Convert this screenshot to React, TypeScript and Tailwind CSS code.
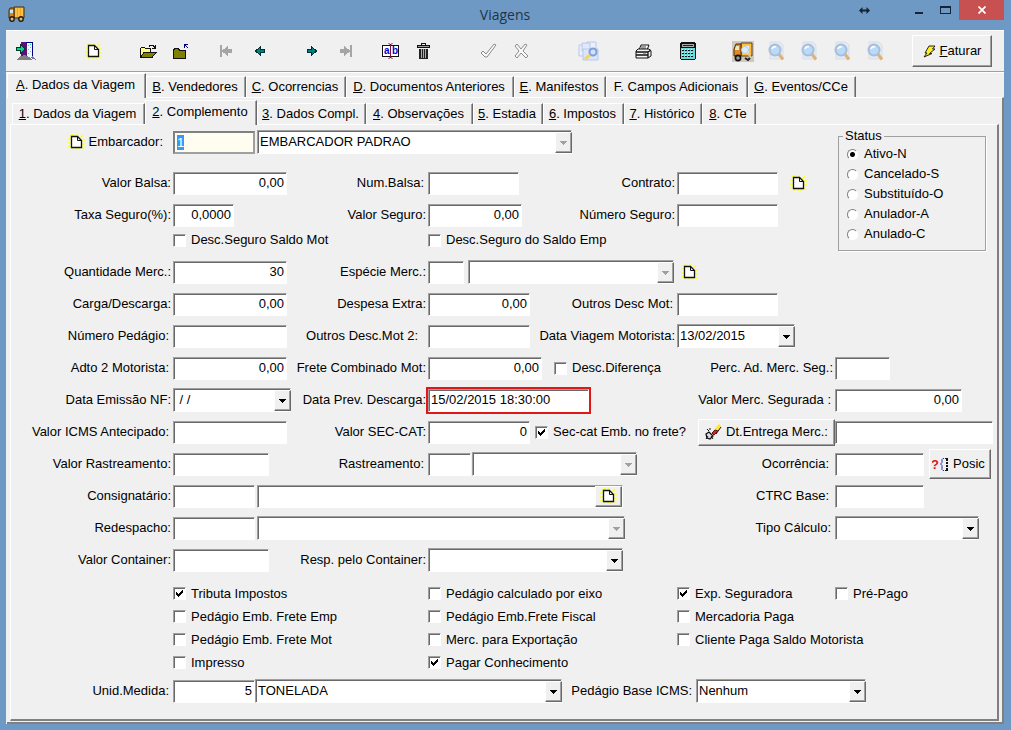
import { useId, type ReactNode } from "react";

const SUNKEN =
    "border border-t-[#a0a0a0] border-l-[#a0a0a0] border-r-white border-b-white bg-white shadow-[inset_1px_1px_0_#696969]";
const RAISED =
    "border border-t-white border-l-white border-r-[#696969] border-b-[#696969] bg-[#f0f0f0] shadow-[inset_-1px_-1px_0_#a0a0a0]";
const ROW = "grid h-8 grid-cols-[162px_255px_249px_158px_minmax(0,1fr)] items-center";
const CELL = "flex items-center justify-between whitespace-nowrap";

/* ---------- icons ---------- */

function TruckIcon() {
    return (
        <svg width="18" height="16" viewBox="0 0 18 16">
            <path d="M6 1h10v11H6z" fill="#f5a81c" stroke="#4a2c08" />
            <path d="M8 2v9M11 2v9M14 2v9" stroke="#ffd873" />
            <path d="M1 4l1-2h4v10H1z" fill="#d9881a" stroke="#4a2c08" />
            <path d="M2 4h3v3H2z" fill="#cfe4f5" />
            <circle cx="4" cy="13" r="2.2" fill="#d8c090" stroke="#2a1a08" strokeWidth="1.4" />
            <circle cx="13" cy="13" r="2.2" fill="#d8c090" stroke="#2a1a08" strokeWidth="1.4" />
        </svg>
    );
}

function ExitIcon() {
    return (
        <svg width="21" height="19" viewBox="0 0 21 19" shapeRendering="crispEdges">
            <path d="M5 0h12v14H5z" fill="#000080" />
            <path d="M9 1h7v15H9z" fill="#e8ffff" />
            <path
                d="M10 2h1v1h-1zM12 3h1v1h-1zM14 2h1v1h-1zM10 5h1v1h-1zM12 7h1v1h-1zM14 5h1v1h-1zM10 9h1v1h-1zM12 11h1v1h-1zM14 9h1v1h-1z"
                fill="#22ccee"
            />
            <path d="M5 0h4l2 2v14l-6-2z" fill="#5b1080" />
            <path d="M0 18l5-4 4-1 4 2 3 3z" fill="#808080" />
            <path d="M16 14l4 3v1l-5-2z" fill="#7a70a8" />
            <path d="M.5 5.500h4v-3L9 7l-4.500 4.500v-3h-4z" fill="#00d890" stroke="#003828" />
        </svg>
    );
}

function NewDocIcon() {
    return (
        <svg width="17" height="16" viewBox="0 0 17 16">
            <path
                d="M4 0l2 3M9 0v2M15 1l-3 3M0 5h3M0 9h3M0 13l3-1M17 6h-3M17 10h-3M16 15l-2-2M8 16v-2M2 1l2 2M11 16v-2M4 16v-2"
                stroke="#ffff2e"
                strokeWidth="1.500"
            />
            <path d="M3.500 2.500h6l4 4v7h-10z" fill="#fff" stroke="#111" strokeWidth="1.300" />
            <path d="M9.500 2.500v4h4" fill="none" stroke="#111" />
        </svg>
    );
}

function OpenFolderIcon() {
    return (
        <svg width="17" height="14" viewBox="0 0 17 14" shapeRendering="crispEdges">
            <path d="M.5 13V4.500l1-1h3l1 1h5V8" fill="#ffff88" stroke="#111" />
            <path d="M.5 13.500L4 8.500h12l-4 5z" fill="#808000" stroke="#111" />
            <path d="M9 2.500l1-1h3l2 2M15.500 1v3H12" fill="none" stroke="#111" />
        </svg>
    );
}

function CloseFolderIcon() {
    return (
        <svg width="17" height="15" viewBox="0 0 17 15" shapeRendering="crispEdges">
            <path d="M.5 14.500V6.500l1-2h4l1 2h6v8z" fill="#808000" stroke="#111" />
            <path d="M11.500 4V.5H15M12 1l3 3" fill="none" stroke="#00007a" />
        </svg>
    );
}

function ArrowIcon({ back, bar, off }: { back?: boolean; bar?: boolean; off?: boolean }) {
    return (
        <svg
            width="15"
            height="12"
            viewBox="0 0 15 12"
            shapeRendering="crispEdges"
            className={back ? "rotate-180" : undefined}
        >
            <path
                d="M1.500 4.500h4v-3l5 4.500-5 4.500v-3h-4z"
                fill={off ? "#a5a5a5" : "#008080"}
                stroke={off ? "#a5a5a5" : "#003030"}
            />
            {bar && <path d="M11 0h2v12h-2z" fill="#a5a5a5" />}
        </svg>
    );
}

function RenameIcon() {
    return (
        <svg width="18" height="16" viewBox="0 0 18 16">
            <path d="M.5 2.500h16v11H.5z" fill="#fff" stroke="#111" strokeWidth="1.300" shapeRendering="crispEdges" />
            <path d="M8.500 1v14M6.500.5l2 1 2-1M6.500 15.500l2-1 2 1" fill="none" stroke="#801030" />
            <text x="2" y="11" fontSize="10" fontWeight="700" fontFamily="Liberation Sans, sans-serif" fill="#0000e0">a</text>
            <text x="10" y="11" fontSize="10" fontWeight="700" fontFamily="Liberation Sans, sans-serif" fill="#0000e0">b</text>
        </svg>
    );
}

function TrashIcon() {
    return (
        <svg width="13" height="17" viewBox="0 0 13 17" shapeRendering="crispEdges">
            <path d="M4.500 2.500v-2h4v2" fill="none" stroke="#111" />
            <path d="M0 2h13v3H0z" fill="#111" />
            <path d="M1 3h11v1H1z" fill="#999" />
            <path d="M2 6h9v10H2z" fill="#222" />
            <path d="M4.500 6v9M6.500 6v9M8.500 6v9" stroke="#aaa" />
        </svg>
    );
}

function CheckOutlineIcon() {
    return (
        <svg width="17" height="16" viewBox="0 0 17 16">
            <path d="M1 10l2-2 3 3 8-10 2 1L7 14H5z" fill="#f8f8f8" stroke="#8c8c8c" />
        </svg>
    );
}

function CrossOutlineIcon() {
    return (
        <svg width="15" height="16" viewBox="0 0 15 16">
            <path
                d="M1 3l2-2 4 5 4-5 2 1-4 6 5 5-2 2-5-5-4 5-2-2 4-5z"
                fill="#f8f8f8"
                stroke="#8c8c8c"
            />
        </svg>
    );
}

function CopySearchIcon() {
    return (
        <svg width="22" height="20" viewBox="0 0 22 20">
            <path d="M1 4h7v11H1zM9 1h9v8H9z" fill="#eaf0fc" stroke="#b8c8ec" />
            <path d="M4 2h8v8H4z" fill="#dfe9fb" stroke="#b8c8ec" />
            <path d="M5 8h15v11H5z" fill="#dbe6fa" stroke="#b8c8ec" />
            <circle cx="15" cy="11" r="3.500" fill="#d5e3f9" stroke="#7f9ede" strokeWidth="2" />
            <path d="M12 14l-5 4" stroke="#f2d468" strokeWidth="3" />
        </svg>
    );
}

function PrinterIcon() {
    return (
        <svg width="17" height="15" viewBox="0 0 17 15">
            <path d="M4 6l2-5h8l-2 5" fill="#fff" stroke="#111" />
            <path d="M6 3h5M6 5h5" stroke="#111" strokeWidth=".8" />
            <path d="M1 7l2-2h11l2 2v5l-3 2H1z" fill="#f4f4f4" stroke="#111" />
            <path d="M1 8h12l3-2M13 8v6M1 11h12" fill="none" stroke="#111" strokeWidth="1.300" />
            <path d="M8 9.500h3" stroke="#c8b400" />
        </svg>
    );
}

function CalculatorIcon() {
    return (
        <svg width="16" height="18" viewBox="0 0 16 18" shapeRendering="crispEdges">
            <path d="M1 0h14v1h1v16h-1v1H1v-1H0V1h1z" fill="#111" />
            <path d="M2 2h12v3H2z" fill="#aaa" />
            <path d="M3 3h10v1H3z" fill="#222" />
            <path d="M1 6h14v11H1z" fill="#6adada" />
            <path d="M2 8.500h12M2 11.500h12M2 14.500h12" stroke="#111" strokeWidth="1" strokeDasharray="2 1" />
            <path d="M2 7.500h12M2 10.500h12M2 13.500h12" stroke="#d8ffff" strokeDasharray="1 2" />
        </svg>
    );
}

function TruckSearchIcon() {
    return (
        <svg width="22" height="21" viewBox="0 0 22 21">
            <path d="M0 0h22v21H0z" fill="#cdc8c0" />
            <path d="M9 2h11v13H9z" fill="#ffc23a" stroke="#5a3c10" />
            <path d="M2 8l2-5h5v12H2z" fill="#e08a20" stroke="#4a2c08" />
            <path d="M3 8l1-3h3v4H3z" fill="#f4e2c4" />
            <circle cx="6" cy="17" r="2.600" fill="#999" stroke="#111" strokeWidth="1.600" />
            <path d="M11 5h6v8h-6z" fill="#f4f4f4" />
            <circle cx="13" cy="9" r="3.500" fill="#dcecff" stroke="#b0c8e8" />
            <path d="M16 12l3 5" stroke="#e8c8a0" strokeWidth="2" />
            <path d="M13 17l3 2 2-2" fill="none" stroke="#222" strokeWidth="2" />
        </svg>
    );
}

function SearchIcon() {
    return (
        <svg width="18" height="20" viewBox="0 0 18 20">
            <path d="M3 1h10l3 3v14H3z" fill="#e4eaf2" stroke="#d6dfe9" />
            <path d="M11.500 12.500l4.500 6" stroke="#dcb478" strokeWidth="3" />
            <circle cx="8" cy="9" r="5.500" fill="#b9daf8" stroke="#a9bddb" strokeWidth="2" />
            <path d="M5 8q1-3 4-2" fill="none" stroke="#fff" strokeWidth="1.500" />
        </svg>
    );
}

function BoltIcon() {
    return (
        <svg width="13" height="13" viewBox="0 0 13 13">
            <path d="M6 1h6L9.500 4H12L6.500 8.500H9L1 12l3-4H2z" fill="#ffee20" stroke="#222" />
        </svg>
    );
}

function EraserIcon() {
    return (
        <svg width="17" height="16" viewBox="0 0 17 16">
            <path d="M15 1L9 8" stroke="#ffe62a" strokeWidth="3" />
            <path d="M16 3l-5 7" stroke="#111" />
            <path d="M10 6l-3 3 2 2 4-4z" fill="#e02020" stroke="#601010" />
            <path d="M1 10l3-2 4 4-3 3-3-1z" fill="#ddd" stroke="#111" strokeWidth="1.300" />
            <path d="M2 5l2 2M5 4v2M1 15l2-3M8 15l-2-3" stroke="#111" />
        </svg>
    );
}

function QueryIcon() {
    return (
        <svg width="17" height="15" viewBox="0 0 17 15">
            <text x="-1" y="12" fontSize="13" fontWeight="700" fontFamily="Liberation Sans, sans-serif" fill="#e01020">?</text>
            <path d="M12 1.500h-1l-1 1v3L8.500 7 10 8.500v4l1 1h1" fill="none" stroke="#2030c0" />
            <path d="M15 2v12" stroke="#111" strokeWidth="2" strokeDasharray="2 1" />
            <path d="M13 1.500h3M13 13.500h3" stroke="#111" />
        </svg>
    );
}

/* ---------- controls ---------- */

function Label({ htmlFor, className = "pr-0.5", children }: { htmlFor?: string; className?: string; children: ReactNode }) {
    return (
        <label htmlFor={htmlFor} className={`ml-auto shrink-0 whitespace-nowrap text-right ${className}`}>
            {children}
        </label>
    );
}

function Field({ id, width, value = "", left, label }: { id?: string; width: string; value?: string; left?: boolean; label?: string }) {
    return (
        <input
            id={id}
            aria-label={label}
            type="text"
            defaultValue={value}
            className={`h-[23px] shrink-0 px-0.5 pb-px outline-none ${SUNKEN} ${width} ${left ? "text-left" : "text-right"}`}
        />
    );
}

function Combo({ id, width, value = "", disabled, label }: { id?: string; width: string; value?: string; disabled?: boolean; label?: string }) {
    return (
        <div className={`relative h-6 shrink-0 ${width}`}>
            <select
                id={id}
                aria-label={label}
                disabled={disabled}
                className={`h-full w-full appearance-none pr-5 pl-0.5 text-black opacity-100 outline-none ${SUNKEN}`}
            >
                <option>{value}</option>
            </select>
            <span className={`pointer-events-none absolute top-0.5 right-0 bottom-px flex w-[17px] items-center justify-center ${RAISED}`}>
                <svg width="7" height="4" viewBox="0 0 7 4" shapeRendering="crispEdges">
                    <path d="M0 0h7v1H6v1H5v1H4v1H3V3H2V2H1V1H0z" fill={disabled ? "#a0a0a0" : "#000"} />
                </svg>
            </span>
        </div>
    );
}

function Check({ children, checked }: { children: ReactNode; checked?: boolean }) {
    return (
        <label className="flex shrink-0 items-center gap-[5px] whitespace-nowrap">
            <span className="relative size-[13px] shrink-0">
                <input type="checkbox" defaultChecked={checked} className={`peer block size-full appearance-none ${SUNKEN}`} />
                <svg
                    className="pointer-events-none absolute top-[3px] left-[3px] hidden peer-checked:block"
                    width="7"
                    height="7"
                    viewBox="0 0 7 7"
                    shapeRendering="crispEdges"
                >
                    <path d="M0 2h1v1h1v1h1V3h1V2h1V1h1V0h1v3H6v1H5v1H4v1H3v1H2V6H1V5H0z" />
                </svg>
            </span>
            {children}
        </label>
    );
}

function NewButton({ label, className = "" }: { label: string; className?: string }) {
    return (
        <button type="button" aria-label={label} className={className}>
            <NewDocIcon />
        </button>
    );
}

type TabDef = { key: string; text: string; width: string; plain?: boolean };

function Tabs({ tabs, active }: { tabs: TabDef[]; active: string }) {
    return (
        <div role="tablist" className="flex h-6 items-end">
            {tabs.map((t) => {
                const on = t.key === active;
                return (
                    <button
                        key={t.key}
                        type="button"
                        role="tab"
                        aria-selected={on}
                        className={`shrink-0 whitespace-nowrap border-t border-r border-l border-t-white border-r-[#696969] border-l-white bg-[#f0f0f0] pr-0.5 text-center shadow-[inset_-1px_0_0_#a0a0a0] ${t.width} ${
                            on ? "relative -mb-px h-[25px] pb-0.5" : "h-[21px]"
                        }`}
                    >
                        {t.plain ? t.key : <u>{t.key}</u>}. {t.text}
                    </button>
                );
            })}
        </div>
    );
}

const mainTabs: TabDef[] = [
    { key: "A", text: "Dados da Viagem", width: "w-[139px]" },
    { key: "B", text: "Vendedores", width: "w-[100px]" },
    { key: "C", text: "Ocorrencias", width: "w-[100px]" },
    { key: "D", text: "Documentos Anteriores", width: "w-[168px]" },
    { key: "E", text: "Manifestos", width: "w-[92px]" },
    { key: "F", text: "Campos Adicionais", width: "w-[142px]", plain: true },
    { key: "G", text: "Eventos/CCe", width: "w-[108px]" },
];

const subTabs: TabDef[] = [
    { key: "1", text: "Dados da Viagem", width: "w-[133px]" },
    { key: "2", text: "Complemento", width: "w-[112px]" },
    { key: "3", text: "Dados Compl.", width: "w-[109px]" },
    { key: "4", text: "Observações", width: "w-[107px]" },
    { key: "5", text: "Estadia", width: "w-[70px]" },
    { key: "6", text: "Impostos", width: "w-[81px]" },
    { key: "7", text: "Histórico", width: "w-[78px]" },
    { key: "8", text: "CTe", width: "w-[54px]" },
];

const tools: { name: string; icon: ReactNode; space?: string }[] = [
    { name: "Sair", icon: <ExitIcon /> },
    { name: "Novo", icon: <NewDocIcon />, space: "ml-[34px]" },
    { name: "Abrir", icon: <OpenFolderIcon />, space: "ml-[22px]" },
    { name: "Fechar", icon: <CloseFolderIcon /> },
    { name: "Primeiro", icon: <ArrowIcon back bar off />, space: "ml-[11px]" },
    { name: "Anterior", icon: <ArrowIcon back /> },
    { name: "Próximo", icon: <ArrowIcon />, space: "ml-[22px]" },
    { name: "Último", icon: <ArrowIcon bar off /> },
    { name: "Alterar", icon: <RenameIcon />, space: "ml-[11px]" },
    { name: "Excluir", icon: <TrashIcon /> },
    { name: "Confirmar", icon: <CheckOutlineIcon />, space: "ml-8" },
    { name: "Cancelar", icon: <CrossOutlineIcon /> },
    { name: "Duplicar", icon: <CopySearchIcon />, space: "ml-[34px]" },
    { name: "Imprimir", icon: <PrinterIcon />, space: "ml-[22px]" },
    { name: "Calculadora", icon: <CalculatorIcon />, space: "ml-[11px]" },
    { name: "Consultar veículo", icon: <TruckSearchIcon />, space: "ml-[22px]" },
    { name: "Consulta 1", icon: <SearchIcon /> },
    { name: "Consulta 2", icon: <SearchIcon /> },
    { name: "Consulta 3", icon: <SearchIcon /> },
    { name: "Consulta 4", icon: <SearchIcon /> },
];

function TitleBar() {
    return (
        <header className="relative flex h-[30px] items-center justify-center">
            <span className="absolute top-1.5 left-0.5">
                <TruckIcon />
            </span>
            <h1 className="font-['Open_Sans',sans-serif] text-sm text-[#20344a]">Viagens</h1>
            <div className="absolute top-0 right-0 flex h-5 items-center text-[#152536]">
                <svg width="11" height="7" viewBox="0 0 11 7" className="mr-11">
                    <path d="M0 3.500L3.500 0v2.500h4V0L11 3.500 7.500 7V4.500h-4V7z" fill="currentColor" />
                </svg>
                <button type="button" aria-label="Minimizar" className="flex h-5 w-[22px] items-end pb-1.5 pl-px">
                    <span className="h-0.5 w-2 bg-current" />
                </button>
                <button type="button" aria-label="Maximizar" className="flex h-5 w-[23px] items-center pl-1">
                    <span className="h-2 w-[11px] border border-t-2 border-current" />
                </button>
                <button type="button" aria-label="Fechar" className="flex h-5 w-[45px] items-center justify-center bg-[#c75050]">
                    <svg width="8" height="8" viewBox="0 0 8 8">
                        <path d="M.5.5l7 7M7.500.5l-7 7" stroke="#fff" strokeWidth="1.700" />
                    </svg>
                </button>
            </div>
        </header>
    );
}

function StatusBox() {
    const options = ["Ativo-N", "Cancelado-S", "Substituído-O", "Anulador-A", "Anulado-C"];
    return (
        <fieldset className="mt-0.5 mr-[11px] ml-auto h-[123px] w-[148px] border border-[#a0a0a0] pl-2 shadow-[1px_1px_0_#fff]">
            <legend className="-ml-1 px-0.5 leading-4">Status</legend>
            {options.map((o, i) => (
                <label key={o} className="flex h-5 items-center gap-1.5">
                    <input
                        type="radio"
                        name="status"
                        defaultChecked={i === 0}
                        className="size-[11px] appearance-none rounded-full border border-t-[#808080] border-r-white border-b-white border-l-[#808080] bg-white checked:bg-[radial-gradient(circle,#000_2px,#fff_3px)]"
                    />
                    {o}
                </label>
            ))}
        </fieldset>
    );
}

function Form() {
    const uid = useId();
    const id = (name: string) => `${uid}-${name}`;
    return (
        <form className="pt-px pb-3">
            <div className="flex h-[130px]">
                <div className="min-w-0 flex-1">
                    <div className={`${ROW} mb-[9px]`}>
                        <div className="flex items-center justify-end gap-1 pr-2.5">
                            <NewButton label="Novo embarcador" />
                            <label htmlFor={id("emb")}>Embarcador:</label>
                        </div>
                        <div className="col-span-2 flex items-center gap-0.5">
                            <input
                                id={id("emb")}
                                type="text"
                                defaultValue="1"
                                autoFocus
                                onFocus={(e) => e.target.select()}
                                className="h-[23px] w-[82px] border-2 border-[#a0a0a0] border-t-[#808080] border-l-[#808080] bg-[#fffcf0] px-0.5 outline-none selection:bg-[#3399ff] selection:text-white"
                            />
                            <Combo label="Nome do embarcador" width="w-[315px]" value="EMBARCADOR PADRAO" disabled />
                        </div>
                    </div>
                    <div className={ROW}>
                        <Label htmlFor={id("balsa")}>Valor Balsa:</Label>
                        <div className={CELL}>
                            <Field id={id("balsa")} width="w-[114px]" value="0,00" />
                            <Label htmlFor={id("numbalsa")} className="pr-1">Num.Balsa:</Label>
                        </div>
                        <div className={CELL}>
                            <Field id={id("numbalsa")} width="w-[91px]" />
                            <Label htmlFor={id("contrato")}>Contrato:</Label>
                        </div>
                        <div className="flex items-center gap-3">
                            <Field id={id("contrato")} width="w-[101px]" />
                            <NewButton label="Novo contrato" />
                        </div>
                    </div>
                    <div className={ROW}>
                        <Label htmlFor={id("taxa")}>Taxa Seguro(%):</Label>
                        <div className={CELL}>
                            <Field id={id("taxa")} width="w-[61px]" value="0,0000" />
                            <Label htmlFor={id("vseguro")}>Valor Seguro:</Label>
                        </div>
                        <div className={CELL}>
                            <Field id={id("vseguro")} width="w-[94px]" value="0,00" />
                            <Label htmlFor={id("nseguro")}>Número Seguro:</Label>
                        </div>
                        <Field id={id("nseguro")} width="w-[101px]" />
                    </div>
                    <div className="grid h-[18px] grid-cols-[162px_255px_1fr] items-center">
                        <div className="col-start-2">
                            <Check>Desc.Seguro Saldo Mot</Check>
                        </div>
                        <Check>Desc.Seguro do Saldo Emp</Check>
                    </div>
                </div>
                <StatusBox />
            </div>

            <div className={ROW}>
                <Label htmlFor={id("qtd")}>Quantidade Merc.:</Label>
                <div className={CELL}>
                    <Field id={id("qtd")} width="w-[114px]" value="30" />
                    <Label htmlFor={id("especie")}>Espécie Merc.:</Label>
                </div>
                <div className="flex items-center gap-1">
                    <Field id={id("especie")} width="w-[36px]" />
                    <Combo label="Descrição da espécie" width="w-[206px]" disabled />
                </div>
                <NewButton label="Nova espécie" className="ml-1 w-[17px]" />
            </div>
            <div className={ROW}>
                <Label htmlFor={id("carga")}>Carga/Descarga:</Label>
                <div className={CELL}>
                    <Field id={id("carga")} width="w-[114px]" value="0,00" />
                    <Label htmlFor={id("despesa")}>Despesa Extra:</Label>
                </div>
                <div className={CELL}>
                    <Field id={id("despesa")} width="w-[102px]" value="0,00" />
                    <Label htmlFor={id("outros")} className="pr-1">Outros Desc Mot:</Label>
                </div>
                <Field id={id("outros")} width="w-[101px]" />
            </div>
            <div className={ROW}>
                <Label htmlFor={id("pedagio")} className="pr-1">Número Pedágio:</Label>
                <div className={CELL}>
                    <Field id={id("pedagio")} width="w-[114px]" />
                    <Label htmlFor={id("outros2")} className="pr-2.5">Outros Desc.Mot 2:</Label>
                </div>
                <div className={CELL}>
                    <Field id={id("outros2")} width="w-[102px]" />
                    <Label htmlFor={id("dtviagem")}>Data Viagem Motorista:</Label>
                </div>
                <Combo id={id("dtviagem")} width="w-[118px]" value="13/02/2015" />
            </div>
            <div className={ROW}>
                <Label htmlFor={id("adto")} className="pr-1">Adto 2 Motorista:</Label>
                <div className={CELL}>
                    <Field id={id("adto")} width="w-[114px]" value="0,00" />
                    <Label htmlFor={id("frete")}>Frete Combinado Mot:</Label>
                </div>
                <div className="flex items-center gap-3">
                    <Field id={id("frete")} width="w-[114px]" value="0,00" />
                    <Check>Desc.Diferença</Check>
                </div>
                <Label htmlFor={id("perc")}>Perc. Ad. Merc. Seg.:</Label>
                <Field id={id("perc")} width="w-[55px]" />
            </div>
            <div className={ROW}>
                <Label htmlFor={id("emissao")}>Data Emissão NF:</Label>
                <div className={CELL}>
                    <Combo id={id("emissao")} width="w-[118px]" value={"\u00a0/ /"} />
                    <Label htmlFor={id("prev")}>Data Prev. Descarga:</Label>
                </div>
                <div className="-ml-0.5 flex h-[27px] w-[165px] items-center border-2 border-[#e01818]">
                    <Field id={id("prev")} width="w-full" value="15/02/2015 18:30:00" left />
                </div>
                <Label htmlFor={id("segurada")} className="pr-1">Valor Merc. Segurada :</Label>
                <Field id={id("segurada")} width="w-[127px]" value="0,00" />
            </div>
            <div className={ROW}>
                <Label htmlFor={id("icms")} className="pr-1">Valor ICMS Antecipado:</Label>
                <div className={CELL}>
                    <Field id={id("icms")} width="w-[114px]" />
                    <Label htmlFor={id("seccat")}>Valor SEC-CAT:</Label>
                </div>
                <div className="flex items-center gap-[5px]">
                    <Field id={id("seccat")} width="w-[102px]" value="0" />
                    <Check checked>Sec-cat Emb. no frete?</Check>
                </div>
                <button type="button" className={`ml-auto flex h-[27px] w-[137px] items-center justify-center gap-1 ${RAISED}`}>
                    <EraserIcon />
                    <span className="whitespace-nowrap">Dt.Entrega Merc.:</span>
                </button>
                <Field label="Dt.Entrega Merc." width="mr-1" />
            </div>
            <div className={ROW}>
                <Label htmlFor={id("vrast")}>Valor Rastreamento:</Label>
                <div className={CELL}>
                    <Field id={id("vrast")} width="w-[96px]" />
                    <Label htmlFor={id("rast")} className="pr-1">Rastreamento:</Label>
                </div>
                <div className="flex items-center gap-px">
                    <Field id={id("rast")} width="w-[43px]" />
                    <Combo label="Descrição do rastreamento" width="w-[165px]" disabled />
                </div>
                <Label htmlFor={id("ocor")} className="pr-1.5">Ocorrência:</Label>
                <div className="flex items-center gap-[5px]">
                    <Field id={id("ocor")} width="w-[89px]" />
                    <button type="button" className={`flex h-[30px] w-[62px] items-center gap-1 pl-0.5 ${RAISED}`}>
                        <QueryIcon />
                        Posic
                    </button>
                </div>
            </div>
            <div className={ROW}>
                <Label htmlFor={id("consig")}>Consignatário:</Label>
                <div className="col-span-2 flex items-center gap-0.5">
                    <Field id={id("consig")} width="w-[82px]" />
                    <div className={`flex h-[23px] w-[366px] ${SUNKEN}`}>
                        <input aria-label="Nome do consignatário" type="text" className="ml-0.5 min-w-0 flex-1 outline-none" />
                        <button type="button" aria-label="Novo consignatário" className={`flex w-[27px] items-center justify-center ${RAISED}`}>
                            <NewDocIcon />
                        </button>
                    </div>
                </div>
                <Label htmlFor={id("ctrc")} className="pr-1.5">CTRC Base:</Label>
                <Field id={id("ctrc")} width="w-[89px]" />
            </div>
            <div className={ROW}>
                <Label htmlFor={id("redesp")}>Redespacho:</Label>
                <div className="col-span-2 flex items-center gap-0.5">
                    <Field id={id("redesp")} width="w-[82px]" />
                    <Combo label="Nome do redespacho" width="w-[368px]" disabled />
                </div>
                <Label htmlFor={id("tipo")} className="pr-1">Tipo Cálculo:</Label>
                <Combo id={id("tipo")} width="w-[144px]" />
            </div>
            <div className={ROW}>
                <Label htmlFor={id("vcont")}>Valor Container:</Label>
                <div className={CELL}>
                    <Field id={id("vcont")} width="w-[96px]" />
                    <Label htmlFor={id("rcont")}>Resp. pelo Container:</Label>
                </div>
                <Combo id={id("rcont")} width="w-[195px]" />
            </div>

            <div className="mt-1.5 mb-px grid grid-cols-[255px_249px_158px_minmax(0,1fr)] pl-[162px] leading-[23px]">
                <div>
                    <Check checked>Tributa Impostos</Check>
                    <Check>Pedágio Emb. Frete Emp</Check>
                    <Check>Pedágio Emb. Frete Mot</Check>
                    <Check>Impresso</Check>
                </div>
                <div>
                    <Check>Pedágio calculado por eixo</Check>
                    <Check>Pedágio Emb.Frete Fiscal</Check>
                    <Check>Merc. para Exportação</Check>
                    <Check checked>Pagar Conhecimento</Check>
                </div>
                <div>
                    <Check checked>Exp. Seguradora</Check>
                    <Check>Mercadoria Paga</Check>
                    <Check>Cliente Paga Saldo Motorista</Check>
                </div>
                <div>
                    <Check>Pré-Pago</Check>
                </div>
            </div>

            <div className={ROW}>
                <Label htmlFor={id("unid")} className="pr-1">Unid.Medida:</Label>
                <div className="col-span-4 flex items-center">
                    <Field id={id("unid")} width="w-[82px]" value="5" />
                    <Combo label="Descrição da unidade" width="w-[307px]" value="TONELADA" />
                    <label htmlFor={id("base")} className="w-[134px] pr-1 text-right whitespace-nowrap">Pedágio Base ICMS:</label>
                    <Combo id={id("base")} width="w-[170px]" value="Nenhum" />
                </div>
            </div>
        </form>
    );
}

export default function App() {
    return (
        <div className="flex min-h-screen flex-col bg-[#6e99c4] pr-[7px] pb-1.5 pl-1.5 font-['Liberation_Sans',Arial,sans-serif] text-[13px] leading-4 text-black">
            <TitleBar />
            <main className="flex flex-1 flex-col border-t border-white bg-[#f0f0f0]">
                <div role="toolbar" className="flex h-[41px] items-center border-b border-[#a0a0a0] pl-1">
                    {tools.map((t) => (
                        <button
                            key={t.name}
                            type="button"
                            aria-label={t.name}
                            className={`flex h-8 w-[33px] shrink-0 items-center justify-center ${t.space ?? ""}`}
                        >
                            {t.icon}
                        </button>
                    ))}
                    <button type="button" className={`mr-3 ml-auto flex h-8 w-20 items-center justify-center gap-1 ${RAISED}`}>
                        <BoltIcon />
                        <span>
                            <u>F</u>aturar
                        </span>
                    </button>
                </div>
                <div className="flex flex-1 flex-col border-t border-white pl-px">
                    <Tabs tabs={mainTabs} active="A" />
                    <div className="flex flex-1 flex-col border-t border-r-2 border-b-2 border-t-white border-r-[#808080] border-b-[#808080] pt-0.5 pr-[3px] pb-px pl-[3px]">
                        <div className="pl-0.5">
                            <Tabs tabs={subTabs} active="2" />
                        </div>
                        <div role="tabpanel" className="flex-1 border-t border-r-2 border-b-2 border-l border-t-white border-r-[#808080] border-b-[#808080] border-l-white">
                            <Form />
                        </div>
                    </div>
                </div>
            </main>
        </div>
    );
}
